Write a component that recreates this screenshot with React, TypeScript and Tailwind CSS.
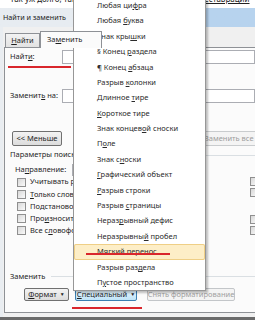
import type { ReactNode } from 'react';

// '&' marks the accelerator letter (underlined)
const ITEMS = [
  'Любая ци&фра',
  'Любая &буква',
  'Знак кры&шки',
  '§ Конец &раздела',
  '¶ Конец &абзаца',
  'Разрыв &колонки',
  'Длинное &тире',
  '&Короткое тире',
  'Знак концев&ой сноски',
  'П&оле',
  'Знак с&носки',
  '&Графический объект',
  '&Разрыв строки',
  'Разрыв &страницы',
  'Нераз&рывный дефис',
  'Неразрывны&й пробел',
  'Мягкий перенос',
  'Разрыв раз&дела',
  'П&устое пространство',
];

const ACTIVE = 16;

function Acc({ s }: { s: string }) {
  const i = s.indexOf('&');
  if (i < 0) return <span>{s}</span>;
  return (
    <span>
      {s.slice(0, i)}
      <u>{s[i + 1]}</u>
      {s.slice(i + 2)}
    </span>
  );
}

function Check() {
  return (
    <span className="block w-[9px] h-[9px] shrink-0 border border-[#8f8f8f] bg-gradient-to-br from-[#d8d8d8] to-[#fafafa]" />
  );
}

function Btn({ children, className }: { children: ReactNode; className: string }) {
  return (
    <div
      className={`h-full shrink-0 flex items-center justify-center rounded-[2px] border whitespace-nowrap ${className}`}
    >
      {children}
    </div>
  );
}

export default function App() {
  const leftChecks = ['Учитывать регистр', '&Только слово целиком', 'Подстановочные знаки', 'Про&износится как', 'Все с&ловоформы'];

  return (
    <div className="relative w-[255px] h-[320px] overflow-hidden bg-white font-['Noto_Sans',sans-serif] text-[7.5px] leading-none text-[#1e1e1e]">
      {/* page text behind the dialog */}
      <div className="h-[8px] overflow-hidden flex text-[8px] text-[#222] whitespace-nowrap">
        <span className="w-[193px] shrink-0 pl-[10px] -mt-[5px]">Так уж долго, так уж</span>
        <span className="-mt-[5px] underline">е реставрации</span>
      </div>

      {/* title bar */}
      <div className="h-[19px] flex items-center pl-[3px] text-[7.2px] text-[#1a1a1a] bg-gradient-to-r from-[#e7ecf1] from-30% to-[#b7d3ee] to-80%">
        Найти и заменить
      </div>

      {/* dialog body */}
      <div className="h-[290px] flex flex-col bg-[#f0f0f0] border-l-[3px] border-[#e9edf1]">
        {/* tabs */}
        <div className="h-[20px] flex items-end pl-[2px]">
          <div className="w-[35px] h-[14px] flex items-center justify-center border border-b-0 border-[#8e9196] bg-gradient-to-b from-[#f3f3f3] to-[#e2e2e2]">
            <Acc s="&Найти" />
          </div>
          <div className="relative z-10 -mb-px w-[62px] h-[17px] flex items-center pl-[6px] border border-b-0 border-[#8e9196] bg-[#fbfbfb]">
            <Acc s="За&менить" />
          </div>
          <div className="w-[50px] h-[14px] flex items-center justify-center border border-b-0 border-[#8e9196] bg-gradient-to-b from-[#f3f3f3] to-[#e2e2e2]">
            Перейти
          </div>
        </div>

        {/* tab page */}
        <div className="h-[266px] ml-[1px] flex flex-col pl-[5px] border-l border-t border-b border-[#8e9196] bg-[#fbfbfb]">
          <div className="mt-[2px] h-[14px] flex items-center">
            <span className="w-[52px] shrink-0">
              <Acc s="Найт&и:" />
            </span>
            <div className="flex-1 h-full border border-[#abadb3] bg-white" />
          </div>

          <div className="mt-[25px] h-[14px] flex items-center">
            <span className="w-[52px] shrink-0">
              <Acc s="Заменит&ь на:" />
            </span>
            <div className="flex-1 h-full border border-[#abadb3] bg-white" />
          </div>

          <div className="mt-[28px] h-[15px] flex items-center">
            <Btn className="ml-[2px] w-[50px] border-[#707070] bg-gradient-to-b from-[#f3f3f3] to-[#dcdcdc]">
              &lt;&lt; Меньше
            </Btn>
            <Btn className="ml-[136px] w-[62px] border-[#c9ccce] bg-[#f4f4f4] text-[#9c9c9c]">Заменить все</Btn>
          </div>

          <div className="mt-[3px] h-[12px] flex items-center">
            <span className="shrink-0">Параметры поиска</span>
            <div className="flex-1 h-px ml-[4px] bg-[#dadfe3]" />
          </div>

          <div className="mt-[3px] h-[12px] flex items-center pl-[5px]">
            <span className="w-[57px] shrink-0">
              <Acc s="На&правление:" />
            </span>
            <div className="w-[70px] h-full border border-[#abadb3] bg-white" />
          </div>

          <div className="flex">
            <div className="w-[240px] shrink-0 flex flex-col">
              {leftChecks.map((c) => (
                <div key={c} className="h-[12.2px] flex items-center gap-[4px] pl-[7px] whitespace-nowrap">
                  <Check />
                  <Acc s={c} />
                </div>
              ))}
            </div>
            <div className="flex flex-col">
              <div className="mt-[0.5px]">
                <Check />
              </div>
              <div className="mt-[2px]">
                <Check />
              </div>
              <div className="mt-[18px]">
                <Check />
              </div>
              <div className="mt-[2px]">
                <Check />
              </div>
            </div>
          </div>

          <div className="mt-[34px] h-[12px] flex items-center">
            <span className="shrink-0">Заменить</span>
            <div className="flex-1 h-px ml-[6px] bg-[#dadfe3]" />
          </div>

          <div className="mt-[5px] h-[13px] flex items-center">
            <Btn className="ml-[14px] w-[45px] border-[#707070] bg-gradient-to-b from-[#f3f3f3] to-[#dcdcdc] gap-[3px]">
              <Acc s="&Формат" />
              <span className="text-[5px]">▼</span>
            </Btn>
            <Btn className="ml-[6px] w-[62px] border-[#3c7fb1] bg-gradient-to-b from-[#eaf6fd] to-[#bfe4f8] gap-[3px]">
              <Acc s="&Специальный" />
              <span className="text-[5px]">▼</span>
            </Btn>
            <Btn className="ml-[10px] w-[88px] border-[#c3c6c9] bg-[#f4f4f4] text-[#a0a0a0]">Снять форматирование</Btn>
          </div>
        </div>
        <div className="h-[4px]" />
      </div>
      <div className="h-[3px] bg-[#6a6a6a]" />

      {/* "Специальный" drop-down menu */}
      <div className="absolute left-[73px] top-[-3px] w-[133px] flex flex-col border border-[#979797] bg-white shadow-[2px_2px_2px_rgba(0,0,0,0.25)] text-[#2b2b2b]">
        {ITEMS.map((it, i) => (
          <div
            key={it}
            className={`h-[15.4px] flex items-center pl-[23px] whitespace-nowrap ${
              i === ACTIVE ? 'bg-[#fdeec7] ring-1 ring-inset ring-[#efcf86] rounded-[2px]' : ''
            }`}
          >
            <Acc s={it} />
          </div>
        ))}
      </div>

      {/* red annotation strokes */}
      <div className="absolute left-[8px] top-[66px] w-[63px] h-[2px] bg-[#d9262c]" />
      <div className="absolute left-[86px] top-[253px] w-[84px] h-[2px] bg-[#d9262c]" />
      <div className="absolute left-[72px] top-[307px] w-[70px] h-[2px] bg-[#d9262c]" />
    </div>
  );
}
